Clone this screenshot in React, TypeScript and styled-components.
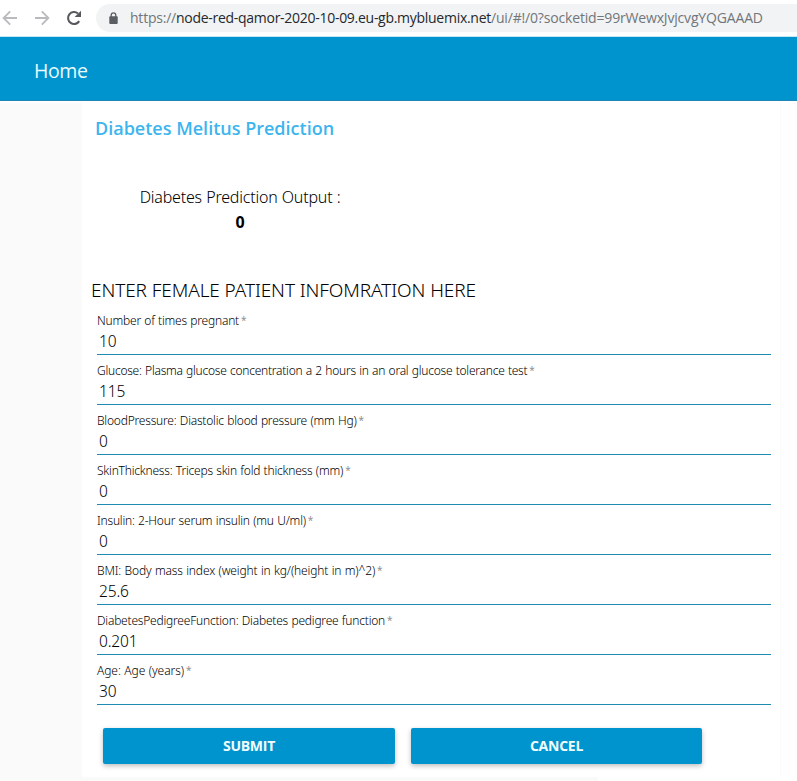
import React from "react";
import styled, { createGlobalStyle } from "styled-components";

const GlobalStyle = createGlobalStyle`
  *, *::before, *::after { box-sizing: border-box; }
  body {
    margin: 0;
    background: #fefefe;
    font-family: "Noto Sans", "Open Sans", sans-serif;
    color: #000;
    overflow: hidden;
  }
`;

const Page = styled.div`
  display: flex;
  flex-direction: column;
  height: 781px;
`;

const BrowserBar = styled.div`
  display: flex;
  flex: none;
  align-items: center;
  height: 37px;
  background: #fff;
  border-bottom: 1px solid #c3e8f6;
`;

const NavIcons = styled.div`
  display: flex;
  width: 96px;
  flex: none;
  svg { display: block; flex: none; }
`;

const AddressBar = styled.div`
  display: flex;
  align-items: center;
  flex: 1;
  height: 28px;
  padding-left: 13px;
  border-radius: 14px 0 0 14px;
  background: #f1f3f4;
`;

const Url = styled.div`
  display: flex;
  margin-left: 12px;
  font: 400 14px/20px "Open Sans", sans-serif;
  white-space: pre;
`;

const UrlPart = styled.span<{ $dark?: boolean; $spacing: number }>`
  color: ${(p) => (p.$dark ? "#25282c" : "#72767a")};
  letter-spacing: ${(p) => p.$spacing}px;
`;

const Toolbar = styled.header`
  display: flex;
  flex: none;
  align-items: center;
  height: 64px;
  padding: 5px 0 0 34px;
  background: #0094ce;
  border-bottom: 1px solid #1c86b6;
  color: #e9fbff;
  font: 400 19.5px/28px "Open Sans", sans-serif;
  letter-spacing: -0.4px;
`;

const Content = styled.main`
  display: grid;
  grid-template-columns: 82px 699px 1fr;
  grid-template-rows: 676px 4px;
`;

const SideMargin = styled.div`
  margin-top: 2px;
  background: #fafafa;
`;

const BottomMargin = styled.div`
  grid-column: 1 / 3;
  width: 598px;
  background: #fafafa;
`;

const Card = styled.section`
  display: flex;
  flex-direction: column;
  background: #fff;
  border-right: 1px solid #fbfbfb;
`;

const Title = styled.h1`
  margin: 14px 0 0 13px;
  font: 600 18px/27px "Open Sans", sans-serif;
  color: #3db5ee;
  white-space: nowrap;
`;

const Output = styled.div`
  display: flex;
  flex-direction: column;
  align-items: center;
  width: 200px;
  margin: 43px 0 0 58px;
`;

const OutputLabel = styled.div`
  font-size: 16px;
  font-weight: 300;
  line-height: 25px;
  letter-spacing: -0.2px;
  word-spacing: 0.3px;
  white-space: nowrap;
`;

const OutputValue = styled.div`
  font: 700 16px/25px "Open Sans", sans-serif;
`;

const SectionHeading = styled.h2`
  margin: 42px 0 0 9px;
  font-size: 19px;
  font-weight: 300;
  line-height: 27px;
  letter-spacing: -0.09px;
  white-space: nowrap;
`;

const Form = styled.form`
  display: flex;
  flex-direction: column;
  padding: 1px 9px 0 15px;
`;

const Field = styled.label`
  display: flex;
  flex-direction: column;
  height: 50px;
  padding-top: 7px;
  border-bottom: 1px solid #1f8bb2;
`;

const FieldLabel = styled.span<{ $spacing: number }>`
  display: flex;
  height: 18px;
  font-size: 12px;
  font-weight: 300;
  line-height: 18px;
  letter-spacing: ${(p) => p.$spacing}px;
  word-spacing: 0.5px;
  white-space: nowrap;
`;

const Required = styled.span`
  margin-left: 2px;
  font: 400 10px/17px "Open Sans", sans-serif;
  letter-spacing: 0;
  color: #888;
`;

const FieldInput = styled.input`
  width: 100%;
  height: 23px;
  padding: 0 2px;
  border: 0;
  outline: 0;
  background: transparent;
  color: #000;
  font: 300 15.5px/23px "Noto Sans", sans-serif;
  letter-spacing: -0.15px;
`;

const Actions = styled.div`
  display: grid;
  grid-template-columns: 292px 291px;
  gap: 16px;
  padding: 23px 0 0 21px;
`;

const Button = styled.button`
  height: 36px;
  padding: 0;
  border: 0;
  border-radius: 2px;
  background: #0094ce;
  box-shadow: 0 2px 5px rgba(0, 0, 0, 0.26);
  color: #f0fdff;
  font: 700 14px/36px "Open Sans", sans-serif;
  letter-spacing: -0.25px;
`;

const fields = [
  { label: "Number of times pregnant", value: "10", spacing: -0.21 },
  { label: "Glucose: Plasma glucose concentration a 2 hours in an oral glucose tolerance test", value: "115", spacing: -0.24 },
  { label: "BloodPressure: Diastolic blood pressure (mm Hg)", value: "0", spacing: -0.21 },
  { label: "SkinThickness: Triceps skin fold thickness (mm)", value: "0", spacing: -0.21 },
  { label: "Insulin: 2-Hour serum insulin (mu U/ml)", value: "0", spacing: -0.21 },
  { label: "BMI: Body mass index (weight in kg/(height in m)^2)", value: "25.6", spacing: -0.15 },
  { label: "DiabetesPedigreeFunction: Diabetes pedigree function", value: "0.201", spacing: -0.21 },
  { label: "Age: Age (years)", value: "30", spacing: -0.07 },
];

export default function App() {
  return (
    <Page>
      <GlobalStyle />
      <BrowserBar>
        <NavIcons>
          <svg width="96" height="36" viewBox="0 0 96 36" fill="none">
            <path d="M17 18H4M10.2 11.3L3.6 18l6.6 6.7" stroke="#b9babb" strokeWidth="1.8" />
            <path d="M35 18h13M41.8 11.3l6.6 6.7-6.6 6.7" stroke="#b9babb" strokeWidth="1.8" />
            <path d="M79.2 21.1A6 6 0 1 1 78 13.5" stroke="#55585c" strokeWidth="2.1" />
            <path d="M81 10.8v6.3h-6.4z" fill="#55585c" />
          </svg>
        </NavIcons>
        <AddressBar>
          <svg width="9" height="13" viewBox="0 0 9 13" fill="none">
            <path d="M2.2 5V3.2a2.3 2.3 0 0 1 4.6 0V5" stroke="#5b5e62" strokeWidth="1.3" />
            <rect x="0.3" y="4.3" width="8.4" height="7.7" rx="0.9" fill="#5b5e62" />
          </svg>
          <Url>
            <UrlPart $spacing={-0.22}>https://</UrlPart>
            <UrlPart $dark $spacing={-0.28}>node-red-qamor-2020-10-09.eu-gb.mybluemix.net</UrlPart>
            <UrlPart $spacing={-0.17}>/ui/#!/0?socketid=99rWewxJvjcvgYQGAAAD</UrlPart>
          </Url>
        </AddressBar>
      </BrowserBar>
      <Toolbar>Home</Toolbar>
      <Content>
        <SideMargin />
        <Card>
          <Title>Diabetes Melitus Prediction</Title>
          <Output>
            <OutputLabel>Diabetes Prediction Output :</OutputLabel>
            <OutputValue>0</OutputValue>
          </Output>
          <SectionHeading>ENTER FEMALE PATIENT INFOMRATION HERE</SectionHeading>
          <Form onSubmit={(e) => e.preventDefault()}>
            {fields.map((f) => (
              <Field key={f.label}>
                <FieldLabel $spacing={f.spacing}>
                  {f.label}
                  <Required>*</Required>
                </FieldLabel>
                <FieldInput defaultValue={f.value} />
              </Field>
            ))}
          </Form>
          <Actions>
            <Button type="submit">SUBMIT</Button>
            <Button type="button">CANCEL</Button>
          </Actions>
        </Card>
        <div />
        <BottomMargin />
      </Content>
    </Page>
  );
}
